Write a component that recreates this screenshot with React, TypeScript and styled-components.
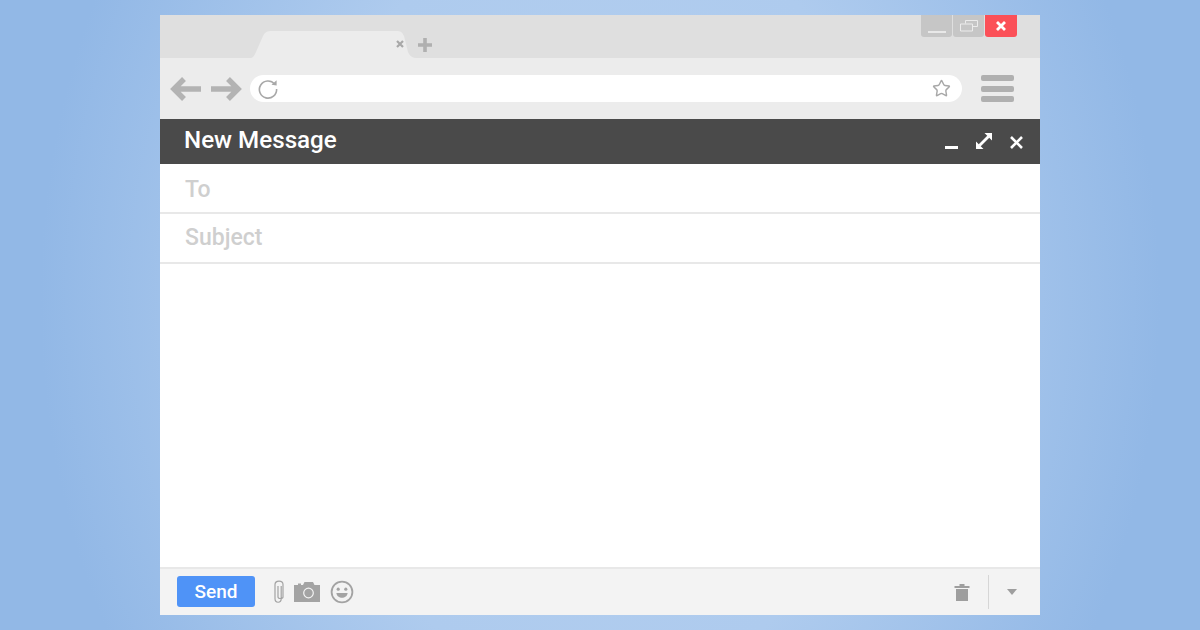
import styled, { createGlobalStyle } from 'styled-components';
import { Star } from 'lucide-react';

const GlobalStyle = createGlobalStyle`
  html, body {
    margin: 0;
    padding: 0;
    height: 100%;
  }
  #root {
    height: 100%;
  }
  body {
    font-family: 'Roboto', 'Liberation Sans', sans-serif;
    overflow: hidden;
  }
`;

function BackArrow() {
  return (
    <svg width="32" height="26" viewBox="0 0 32 26">
      <path d="M14 3 L4 13 L14 23 M4 13 H31" fill="none" stroke="#b3b3b3" strokeWidth="5.5" />
    </svg>
  );
}

function ForwardArrow() {
  return (
    <svg width="32" height="26" viewBox="0 0 32 26">
      <path d="M18 3 L28 13 L18 23 M28 13 H1" fill="none" stroke="#b3b3b3" strokeWidth="5.5" />
    </svg>
  );
}

function Reload() {
  return (
    <svg width="22" height="22" viewBox="0 0 22 22">
      <path d="M17.6 6 A8.6 8.6 0 1 0 19.6 11" fill="none" stroke="#a8a8a8" strokeWidth="1.6" />
      <path d="M14.5 6.8 L19.6 7.4 L19.6 2.2 Z" fill="#a8a8a8" />
    </svg>
  );
}

function Clip() {
  return (
    <svg width="10" height="24" viewBox="0 0 10 24">
      <path
        d="M7.2 6 V18.5 C7.2 23.5 1 23.5 1 18.5 V4.5 C1 0 9 0 9 4.5 V17 C9 19 4 19 4 17 V6"
        fill="none"
        stroke="#a3a3a3"
        strokeWidth="1.2"
      />
    </svg>
  );
}

function Camera() {
  return (
    <svg width="26" height="20" viewBox="0 0 26 20">
      <path
        fillRule="evenodd"
        d="M0 3 H4 V1.5 H7 V3 H9 L10.5 0 H19 L20.5 3 H26 V20 H0 Z M14.5 5.6 A5.4 5.4 0 1 0 14.5 16.4 A5.4 5.4 0 1 0 14.5 5.6 Z"
        fill="#a3a3a3"
      />
      <circle cx="14.5" cy="11" r="4.2" fill="#a3a3a3" />
    </svg>
  );
}

function Smile() {
  return (
    <svg width="24" height="24" viewBox="0 0 24 24">
      <circle cx="12" cy="12" r="10.4" fill="none" stroke="#a3a3a3" strokeWidth="1.8" />
      <circle cx="8.2" cy="9.2" r="1.6" fill="#a3a3a3" />
      <circle cx="15.8" cy="9.2" r="1.6" fill="#a3a3a3" />
      <path d="M6.4 13 H17.6 C17.2 19.4 6.8 19.4 6.4 13 Z" fill="#a3a3a3" />
    </svg>
  );
}

function Trash() {
  return (
    <svg width="16" height="18" viewBox="0 0 16 18">
      <path d="M0.5 3 H5.5 V1 H10.5 V3 H15.5 V5 H0.5 Z M2 6 H14 V18 H2 Z" fill="#9e9e9e" />
    </svg>
  );
}

function App() {
  return (
    <Page>
      <GlobalStyle />
      <BrowserWindow>
        <TabStrip>
          <Tab>
            <TabShape width="168" height="27" viewBox="0 0 168 27">
              <path
                d="M0 27 C3 27 4 25 6 21 L13 5 C15 1 17 0 22 0 H146 C151 0 152 1 154 5 L158 21 C160 25 162 27 168 27 Z"
                fill="#ececec"
              />
            </TabShape>
            <TabClose>
              <svg width="8" height="8" viewBox="0 0 8 8">
                <path d="M1 1 L7 7 M7 1 L1 7" stroke="#a8a8a8" strokeWidth="2.2" />
              </svg>
            </TabClose>
          </Tab>
          <NewTab>
            <svg width="14" height="14" viewBox="0 0 14 14">
              <path d="M7 0 V14 M0 7 H14" stroke="#b0b0b0" strokeWidth="3.6" />
            </svg>
          </NewTab>
          <WindowControls>
            <ControlButton>
              <svg width="18" height="18" viewBox="0 0 18 18">
                <rect width="18" height="2" y="14" fill="#e8e8e8" />
              </svg>
            </ControlButton>
            <ControlButton>
              <svg width="18" height="12" viewBox="0 0 18 12">
                <path d="M5.5 3.5 V0.5 H17.5 V6.5 H12.5 M0.5 4 H12.5 V11 H0.5 Z" fill="none" stroke="#ececec" strokeWidth="1" />
              </svg>
            </ControlButton>
            <ControlButton $danger>
              <svg width="10" height="10" viewBox="0 0 10 10">
                <path d="M1 1 L9 9 M9 1 L1 9" stroke="#fff" strokeWidth="2.8" />
              </svg>
            </ControlButton>
          </WindowControls>
        </TabStrip>
        <Toolbar>
          <NavArrows>
            <BackArrow />
            <ForwardArrow />
          </NavArrows>
          <AddressBar>
            <Reload />
            <Star size={19} color="#a8a8a8" strokeWidth={1.8} />
          </AddressBar>
          <Menu>
            <MenuLine />
            <MenuLine />
            <MenuLine />
          </Menu>
        </Toolbar>
        <Compose>
          <ComposeHeader>
            <Title>New Message</Title>
            <HeaderIcons>
              <svg width="13" height="4" viewBox="0 0 13 4">
                <rect width="13" height="3" y="1" fill="#fff" />
              </svg>
              <svg width="16" height="16" viewBox="0 0 16 16">
                <path d="M3.5 12.5 L12.5 3.5" stroke="#fff" strokeWidth="2.8" />
                <path d="M8.5 0 H16 V7.5 Z M0 8.5 V16 H7.5 Z" fill="#fff" />
              </svg>
              <svg width="13" height="13" viewBox="0 0 13 13">
                <path d="M1 1 L12 12 M12 1 L1 12" stroke="#fff" strokeWidth="2.6" />
              </svg>
            </HeaderIcons>
          </ComposeHeader>
          <FieldRow $shift={1}>To</FieldRow>
          <FieldRow $shift={-1}>Subject</FieldRow>
          <MessageBody />
          <Footer>
            <SendButton>Send</SendButton>
            <Attachments>
              <Clip />
              <Camera />
              <Smile />
            </Attachments>
            <FooterEnd>
              <Trash />
              <Divider />
              <Caret />
            </FooterEnd>
          </Footer>
        </Compose>
      </BrowserWindow>
    </Page>
  );
}

const Page = styled.div`
  width: 1200px;
  height: 630px;
  box-sizing: border-box;
  padding: 15px 160px;
  background: radial-gradient(ellipse 560px 700px at 600px 300px, #b4cfef 0%, #aecbee 55%, #92b8e6 100%);
`;

const BrowserWindow = styled.div`
  height: 600px;
  display: flex;
  flex-direction: column;
  background: #fff;
`;

const TabStrip = styled.div`
  position: relative;
  height: 43px;
  flex: none;
  display: flex;
  align-items: flex-end;
  padding-left: 90px;
  background: #dfdfdf;
`;

const Tab = styled.div`
  position: relative;
  width: 168px;
  height: 27px;
`;

const TabShape = styled.svg`
  display: block;
`;

const TabClose = styled.span`
  position: absolute;
  left: 146px;
  top: 9px;
  display: flex;
`;

const NewTab = styled.span`
  display: flex;
  margin: 0 0 6px 0;
`;

const WindowControls = styled.div`
  position: absolute;
  top: 0;
  right: 23px;
  display: flex;
  gap: 1px;
`;

const ControlButton = styled.div<{ $danger?: boolean }>`
  width: ${(p) => (p.$danger ? '32px' : '31px')};
  height: 22px;
  display: flex;
  align-items: center;
  justify-content: center;
  background: ${(p) => (p.$danger ? '#fb5058' : '#c6c6c6')};
  border-radius: 0 0 3px 3px;
`;

const Toolbar = styled.div`
  height: 61px;
  flex: none;
  display: flex;
  align-items: center;
  gap: 19px;
  padding: 0 26px 0 10px;
  background: #ececec;
`;

const NavArrows = styled.div`
  display: flex;
  gap: 8px;
  svg {
    display: block;
  }
`;

const AddressBar = styled.div`
  flex: 1;
  height: 27px;
  margin-left: -11px;
  display: flex;
  align-items: center;
  justify-content: space-between;
  padding: 0 11px 0 7px;
  background: #fff;
  border-radius: 14px;
`;

const Menu = styled.div`
  width: 33px;
  display: flex;
  flex-direction: column;
  gap: 4.5px;
`;

const MenuLine = styled.div`
  height: 6px;
  background: #b0b0b0;
  border-radius: 2px;
`;

const Compose = styled.div`
  flex: 1;
  display: flex;
  flex-direction: column;
`;

const ComposeHeader = styled.div`
  height: 45px;
  flex: none;
  display: flex;
  align-items: center;
  justify-content: space-between;
  padding: 0 17px 0 24px;
  background: #4a4a4a;
`;

const Title = styled.h1`
  margin: 0 0 3px;
  color: #fff;
  font-size: 24.2px;
  font-weight: 500;
`;

const HeaderIcons = styled.div`
  align-self: flex-end;
  margin-bottom: 15px;
  display: flex;
  align-items: flex-end;
  gap: 18px;
  svg {
    display: block;
  }
`;

const FieldRow = styled.div<{ $shift: number }>`
  height: 50px;
  flex: none;
  box-sizing: border-box;
  display: flex;
  align-items: center;
  padding: ${(p) => (p.$shift > 0 ? '2px 25px 0' : '0 25px 2px')};
  color: #cfcfcf;
  font-size: 23px;
  font-weight: 500;
  border-bottom: 2px solid #e8e8e8;
`;

const MessageBody = styled.div`
  flex: 1;
`;

const Footer = styled.div`
  height: 48px;
  flex: none;
  box-sizing: border-box;
  display: flex;
  align-items: center;
  padding: 0 23px 0 17px;
  background: #f3f3f3;
  border-top: 2px solid #e8e8e8;
`;

const SendButton = styled.button`
  width: 78px;
  height: 31px;
  margin-bottom: 2px;
  padding: 0;
  border: none;
  border-radius: 3px;
  background: #4f93f7;
  color: #fff;
  font-family: inherit;
  font-size: 19px;
  font-weight: 500;
`;

const Attachments = styled.div`
  display: flex;
  align-items: center;
  gap: 10px;
  margin-left: 19px;
  svg {
    display: block;
  }
`;

const FooterEnd = styled.div`
  margin-left: auto;
  display: flex;
  align-items: center;
`;

const Divider = styled.div`
  width: 1px;
  height: 34px;
  margin: 0 18px;
  background: #d6d6d6;
`;

const Caret = styled.div`
  width: 0;
  height: 0;
  border-left: 5px solid transparent;
  border-right: 5px solid transparent;
  border-top: 6px solid #9e9e9e;
`;

export default App;
